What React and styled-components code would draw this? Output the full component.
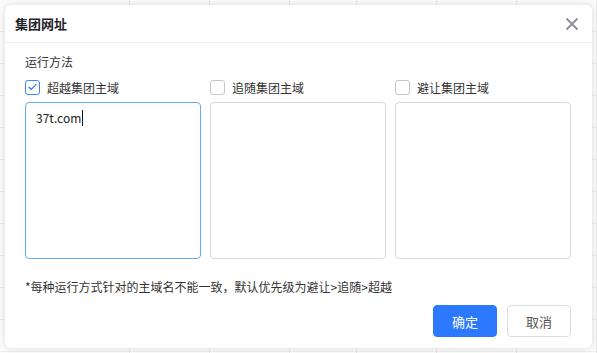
import React from 'react';
import styled, { createGlobalStyle } from 'styled-components';

const GlobalStyle = createGlobalStyle`
  html, body {
    margin: 0;
    padding: 0;
    background: #fbfbfb;
    font-family: "Noto Sans CJK SC", "Noto Sans", sans-serif;
  }
`;

const Page = styled.div`
  position: relative;
  width: 597px;
  height: 353px;
  overflow: hidden;
`;

// faint table behind the modal
const Backdrop = styled.div`
  display: flex;
  height: 100%;
`;

const BackCol = styled.div`
  flex: 0 0 auto;
  border-right: 1px solid #e6e6e6;
  background: repeating-linear-gradient(
    to bottom,
    transparent 0,
    transparent 31px,
    #ececec 31px,
    #ececec 32px
  );
`;

const Dialog = styled.div`
  position: absolute;
  left: 5px;
  top: 5px;
  width: 587px;
  height: 343px;
  box-sizing: border-box;
  background: #fff;
  border-radius: 6px;
  box-shadow: 0 0 6px rgba(0, 0, 0, 0.14);
  display: flex;
  flex-direction: column;
`;

const Header = styled.div`
  height: 37px;
  padding: 0 14px 0 10px;
  display: flex;
  align-items: center;
  justify-content: space-between;
  border-bottom: 1px solid #ebedf0;
`;

const Title = styled.div`
  font-size: 13px;
  font-weight: 700;
  color: #1f2329;
`;

const Close = styled.div`
  width: 12px;
  height: 12px;
  display: flex;
  margin-top: 1px;
`;

const Body = styled.div`
  padding: 9px 21px 0 20px;
  display: flex;
  flex-direction: column;
`;

const Label = styled.div`
  font-size: 12px;
  line-height: 20px;
  color: #333;
`;

const Columns = styled.div`
  display: grid;
  grid-template-columns: repeat(3, 176px);
  column-gap: 9px;
  margin-top: 6px;
`;

const Column = styled.div`
  display: flex;
  flex-direction: column;
  gap: 6px;
`;

const CheckRow = styled.div`
  display: flex;
  align-items: center;
  gap: 7px;
  height: 18px;
  font-size: 12px;
  color: #333;
`;

const Box = styled.div`
  width: 13px;
  height: 13px;
  border: 1px solid ${props => (props.checked ? '#3a86f7' : '#c4c6cc')};
  border-radius: 3px;
  background: #fff;
  display: flex;
  align-items: center;
  justify-content: center;
`;

const Area = styled.div`
  height: 157px;
  box-sizing: border-box;
  border: 1px solid ${props => (props.focused ? '#62aef5' : '#d6d8dd')};
  border-radius: 4px;
  padding: 5px 10px;
  font-size: 12px;
  line-height: 20px;
  color: #222;
`;

const Caret = styled.span`
  display: inline-block;
  width: 1px;
  height: 16px;
  background: #111;
  vertical-align: -3px;
  margin-left: 1px;
`;

const Note = styled.div`
  margin-top: 19px;
  font-size: 12px;
  line-height: 18px;
  color: #333;
`;

const Footer = styled.div`
  display: flex;
  justify-content: flex-end;
  gap: 10px;
  margin-top: 9px;
`;

const Button = styled.button`
  width: 64px;
  height: 32px;
  border-radius: 4px;
  font-family: inherit;
  font-size: 13px;
  cursor: pointer;
  border: 1px solid ${props => (props.primary ? '#2b79ff' : '#dcdee3')};
  background: ${props => (props.primary ? '#2b79ff' : '#fff')};
  color: ${props => (props.primary ? '#fff' : '#555')};
`;

const backCols = [130, 80, 80, 67, 80, 80, 80];

const modes = [
  { label: '超越集团主域', checked: true, value: '37t.com' },
  { label: '追随集团主域', checked: false, value: '' },
  { label: '避让集团主域', checked: false, value: '' },
];

const App = () => {
  return (
    <Page>
      <GlobalStyle />
      <Backdrop>
        {backCols.map((w, i) => (
          <BackCol key={i} style={{ width: w - 1 }} />
        ))}
      </Backdrop>
      <Dialog>
        <Header>
          <Title>集团网址</Title>
          <Close>
            <svg width="12" height="12" viewBox="0 0 12 12">
              <path d="M1 1 L11 11 M11 1 L1 11" stroke="#8a8d94" strokeWidth="1.8" strokeLinecap="round" />
            </svg>
          </Close>
        </Header>
        <Body>
          <Label>运行方法</Label>
          <Columns>
            {modes.map(m => (
              <Column key={m.label}>
                <CheckRow>
                  <Box checked={m.checked}>
                    {m.checked && (
                      <svg width="9" height="8" viewBox="0 0 9 8">
                        <path d="M1 4.2 L3.4 6.4 L8 1.4" fill="none" stroke="#3a86f7" strokeWidth="1.4" strokeLinecap="round" strokeLinejoin="round" />
                      </svg>
                    )}
                  </Box>
                  {m.label}
                </CheckRow>
                <Area focused={m.checked}>
                  {m.value}
                  {m.checked && <Caret />}
                </Area>
              </Column>
            ))}
          </Columns>
          <Note>*每种运行方式针对的主域名不能一致，默认优先级为避让&gt;追随&gt;超越</Note>
          <Footer>
            <Button primary>确定</Button>
            <Button>取消</Button>
          </Footer>
        </Body>
      </Dialog>
    </Page>
  );
};

export default App;
